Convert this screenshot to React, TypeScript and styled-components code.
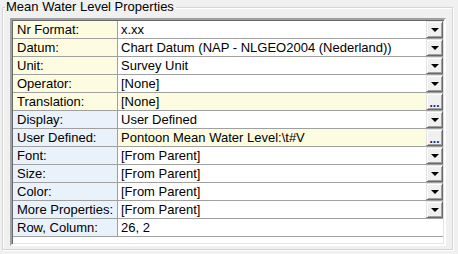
import React, { FC } from 'react';
import styled, { createGlobalStyle } from 'styled-components';

const GlobalStyle = createGlobalStyle`
  html, body {
    margin: 0;
    padding: 0;
    background: #f0f0f0;
    font-family: "Liberation Sans", Arial, sans-serif;
    font-size: 13px;
    color: #000;
  }
`;

const colours = {
  face: '#f0f0f0',
  line: '#a0a0a0',
  dark: '#696969',
  yellow: '#fdfce1',
  blue: '#e9f1fb',
};

const Page = styled.div`
  width: 458px;
  height: 254px;
  padding: 0 5px 0 2px;
  box-sizing: border-box;
`;

const GroupBox = styled.fieldset`
  margin: 0;
  height: 250px;
  box-sizing: border-box;
  border: 1px solid #d5d5d5;
  box-shadow: inset 1px 1px 0 #fff, 1px 1px 0 #fff;
  padding: 0 6px 0 7px;
`;

const Title = styled.legend`
  padding: 0 2px 0 1px;
  margin-left: -5px;
  line-height: 14px;
  font-size: 13px;
`;

const Grid = styled.div`
  margin-top: 4px;
  height: 228px;
  box-sizing: border-box;
  background: #fff;
  border-style: solid;
  border-width: 2px;
  border-color: ${colours.line} #fff #fff ${colours.line};
  box-shadow: inset 1px 1px 0 ${colours.dark}, inset -1px -1px 0 #e3e3e3;
  padding: 1px 1px 0 1px;
`;

const Row = styled.div`
  display: grid;
  grid-template-columns: 105px 1fr;
  height: 18px;
  box-sizing: border-box;
  border-bottom: 1px solid ${colours.line};
`;

const Label = styled.div<{ $tone: 'yellow' | 'blue' }>`
  background: ${p => colours[p.$tone]};
  border-right: 1px solid ${colours.line};
  padding-left: 4px;
  line-height: 17px;
  white-space: nowrap;
`;

const Value = styled.div<{ $highlight?: boolean }>`
  display: flex;
  align-items: stretch;
  background: ${p => (p.$highlight ? colours.yellow : '#fff')};
  min-width: 0;
`;

const ValueText = styled.span`
  flex: 1;
  padding-left: 3px;
  line-height: 17px;
  white-space: nowrap;
  overflow: hidden;
`;

const CellButton = styled.div`
  width: 17px;
  box-sizing: border-box;
  background: ${colours.face};
  border-style: solid;
  border-width: 1px;
  border-color: #e3e3e3 ${colours.dark} ${colours.dark} #e3e3e3;
  box-shadow: inset 1px 1px 0 #fff, inset -1px -1px 0 ${colours.line};
  display: flex;
  align-items: center;
  justify-content: center;
`;

const Arrow = styled.span`
  width: 0;
  height: 0;
  border-left: 4px solid transparent;
  border-right: 4px solid transparent;
  border-top: 4px solid #000;
  margin-top: 1px;
`;

const Dots = styled.span`
  font-size: 12px;
  font-weight: bold;
  line-height: 12px;
  margin-top: 2px;
  color: #1a1a6a;
`;

type Kind = 'drop' | 'more' | 'none';

const rows: { label: string; value: string; kind: Kind; tone: 'yellow' | 'blue' }[] = [
  { label: 'Nr Format:', value: 'x.xx', kind: 'drop', tone: 'yellow' },
  { label: 'Datum:', value: 'Chart Datum (NAP - NLGEO2004 (Nederland))', kind: 'drop', tone: 'yellow' },
  { label: 'Unit:', value: 'Survey Unit', kind: 'drop', tone: 'yellow' },
  { label: 'Operator:', value: '[None]', kind: 'drop', tone: 'yellow' },
  { label: 'Translation:', value: '[None]', kind: 'more', tone: 'yellow' },
  { label: 'Display:', value: 'User Defined', kind: 'drop', tone: 'blue' },
  { label: 'User Defined:', value: 'Pontoon Mean Water Level:\\t#V', kind: 'more', tone: 'blue' },
  { label: 'Font:', value: '[From Parent]', kind: 'drop', tone: 'blue' },
  { label: 'Size:', value: '[From Parent]', kind: 'drop', tone: 'blue' },
  { label: 'Color:', value: '[From Parent]', kind: 'drop', tone: 'blue' },
  { label: 'More Properties:', value: '[From Parent]', kind: 'drop', tone: 'blue' },
  { label: 'Row, Column:', value: '26, 2', kind: 'none', tone: 'blue' },
];

const App: FC = () => {
  return (
    <Page>
      <GlobalStyle />
      <GroupBox>
        <Title>Mean Water Level Properties</Title>
        <Grid>
          {rows.map(r => (
            <Row key={r.label}>
              <Label $tone={r.tone}>{r.label}</Label>
              <Value $highlight={r.kind === 'more'}>
                <ValueText>{r.value}</ValueText>
                {r.kind === 'drop' && (
                  <CellButton>
                    <Arrow />
                  </CellButton>
                )}
                {r.kind === 'more' && (
                  <CellButton>
                    <Dots>...</Dots>
                  </CellButton>
                )}
              </Value>
            </Row>
          ))}
        </Grid>
      </GroupBox>
    </Page>
  );
};

export default App;
